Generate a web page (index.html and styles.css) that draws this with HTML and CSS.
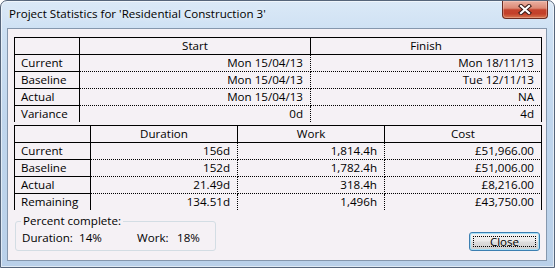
FILE: index.html
```html
<!DOCTYPE html>
<html>
<head>
<meta charset="utf-8">
<link rel="stylesheet" href="styles.css">
</head>
<body>
<div class="window">
  <div class="titlebar">
    <span class="title">Project Statistics for 'Residential Construction 3'</span>
    <div class="close-x">
      <svg width="14" height="11" viewBox="0 0 14 11">
        <path d="M3 2 L11 9 M11 2 L3 9" stroke="#3a1a16" stroke-width="4.2" stroke-linecap="square" fill="none"/>
        <path d="M3 2 L11 9 M11 2 L3 9" stroke="#ffffff" stroke-width="2.2" stroke-linecap="square" fill="none"/>
      </svg>
    </div>
  </div>
  <div class="client">
    <div class="grids">
      <div class="grid g1">
        <div class="c lab h"></div><div class="c h">Start</div><div class="c h">Finish</div>
        <div class="c lab">Current</div><div class="c v">Mon 15/04/13</div><div class="c v last">Mon 18/11/13</div>
        <div class="c lab">Baseline</div><div class="c v">Mon 15/04/13</div><div class="c v last">Tue 12/11/13</div>
        <div class="c lab">Actual</div><div class="c v">Mon 15/04/13</div><div class="c v last">NA</div>
        <div class="c lab end">Variance</div><div class="c v end">0d</div><div class="c v last end">4d</div>
      </div>
      <div class="grid g2">
        <div class="c lab h"></div><div class="c h">Duration</div><div class="c h">Work</div><div class="c h">Cost</div>
        <div class="c lab">Current</div><div class="c v">156d</div><div class="c v">1,814.4h</div><div class="c v last">£51,966.00</div>
        <div class="c lab">Baseline</div><div class="c v">152d</div><div class="c v">1,782.4h</div><div class="c v last">£51,006.00</div>
        <div class="c lab">Actual</div><div class="c v">21.49d</div><div class="c v">318.4h</div><div class="c v last">£8,216.00</div>
        <div class="c lab end">Remaining</div><div class="c v end">134.51d</div><div class="c v end">1,496h</div><div class="c v last end">£43,750.00</div>
      </div>
    </div>
    <div class="bottom">
      <div class="group">
        <span class="legend">Percent complete:</span>
        <div class="pct">
          <span class="p1">Duration:</span><span class="p2">14%</span><span class="p3">Work:</span><span class="p4">18%</span>
        </div>
      </div>
      <button class="btn">Close</button>
    </div>
  </div>
</div>
</body>
</html>
```
FILE: styles.css
```css
html, body {
  margin: 0;
  padding: 0;
}
body {
  width: 555px;
  height: 268px;
  overflow: hidden;
  font-family: "Open Sans", "Noto Sans", sans-serif;
  font-size: 11.6px;
  color: #000;
  background: #ffffff;
}
.window {
  box-sizing: border-box;
  width: 555px;
  height: 268px;
  border: 1px solid #56657a;
  border-radius: 7px 7px 0 0;
  background: linear-gradient(180deg, #dbe9f7 0%, #cde0f3 12%, #c0d6ed 45%, #b9d0e9 100%);
  box-shadow: inset 0 0 0 1px rgba(255, 255, 255, 0.55);
  display: flex;
  flex-direction: column;
}
.titlebar {
  height: 27px;
  display: flex;
  align-items: flex-start;
}
.title {
  margin: 5px 0 0 8px;
  line-height: 16px;
  white-space: nowrap;
  text-shadow: 0 0 6px rgba(255, 255, 255, 0.9);
}
.close-x {
  margin-left: auto;
  margin-right: 6px;
  width: 44px;
  height: 17px;
  border: 1px solid #6a2c22;
  border-top: none;
  border-radius: 0 0 4px 4px;
  background: linear-gradient(180deg, #eab0a2 0%, #dc8a76 42%, #c4432d 52%, #c3402a 75%, #d7764f 100%);
  box-shadow: inset 0 0 0 1px rgba(255, 220, 210, 0.35);
  display: flex;
  align-items: center;
  justify-content: center;
}
.close-x svg {
  display: block;
}
.client {
  flex: 1;
  margin: 0 7px 6px 6px;
  border: 1px solid #8597ad;
  background: #f5f1f5;
  display: flex;
  flex-direction: column;
}
.grids {
  margin: 8px 0 0 6px;
  width: 528px;
}
.grid {
  display: grid;
  border-top: 1px solid #000;
  border-left: 1px solid #000;
}
.g1 {
  grid-template-columns: 65px 231px 231px;
}
.g2 {
  margin-top: 3px;
  grid-template-columns: 76px 147px 147px 157px;
}
.c {
  box-sizing: border-box;
  height: 17px;
  line-height: 16px;
  padding: 0 7px 0 0;
  border-right: 1px dotted #000;
  border-bottom: 1px dotted #000;
  text-align: right;
  white-space: nowrap;
  overflow: hidden;
}
.c.h {
  border-right-style: solid;
  border-bottom-style: solid;
  text-align: center;
  padding: 0;
}
.c.lab {
  border-right-style: solid;
  border-bottom-style: solid;
  text-align: left;
  padding: 0 0 0 6px;
}
.c.last {
  border-right-style: solid;
}
.c.end {
  border-bottom: none;
  height: 16px;
}
.bottom {
  display: flex;
  align-items: flex-start;
  margin: 3px 6px 0 7px;
}
.group {
  position: relative;
  box-sizing: border-box;
  width: 201px;
  height: 30px;
  margin-top: 8px;
  border: 1px solid #d3dde4;
  border-radius: 3px;
}
.legend {
  position: absolute;
  left: 5px;
  top: -9px;
  padding: 0 2px;
  background: #f5f1f5;
  line-height: 16px;
  white-space: nowrap;
}
.pct {
  display: flex;
  margin: 8px 0 0 6px;
  line-height: 16px;
  white-space: nowrap;
}
.p1 { width: 57px; }
.p2 { width: 58px; }
.p3 { width: 40px; }
.btn {
  position: relative;
  margin-left: auto;
  margin-top: 19px;
  box-sizing: border-box;
  width: 71px;
  height: 19px;
  padding: 0;
  border: 1px solid #3c7fb1;
  border-radius: 3px;
  background: linear-gradient(180deg, #f2f2f2 0%, #ebebeb 48%, #dddddd 52%, #cfcfcf 100%);
  box-shadow: inset 0 0 0 1px #a6e0f7;
  font-family: inherit;
  font-size: 11.6px;
  line-height: 16px;
  color: #000;
}
.btn::after {
  content: "";
  position: absolute;
  left: 3px;
  top: 3px;
  right: 3px;
  bottom: 3px;
  border: 1px dotted #000;
}
```
